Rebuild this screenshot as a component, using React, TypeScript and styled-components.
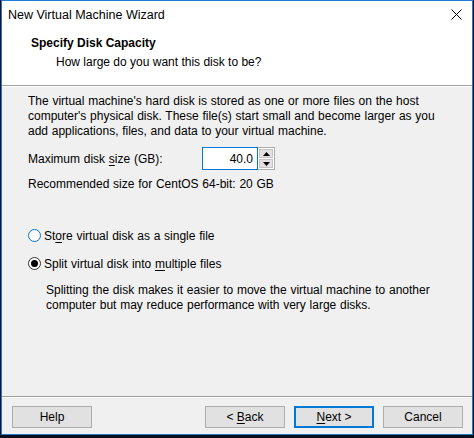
import React from "react";
import styled, { createGlobalStyle } from "styled-components";

const Global = createGlobalStyle`
  html, body { margin: 0; padding: 0; background: #0b0f1a; }
  body { font-family: "Liberation Sans", Arial, sans-serif; font-size: 12px; color: #000; }
  * { box-sizing: border-box; }
`;

const Page = styled.div`
  width: 474px;
  height: 438px;
  padding: 0 1px 3px 1px;
  display: flex;
`;

const Window = styled.div`
  flex: 1;
  display: flex;
  flex-direction: column;
  border: 1px solid #1a7ad4;
  background: #f0f0f0;
`;

const TitleBar = styled.div`
  height: 29px;
  background: #fff;
  display: flex;
  align-items: center;
  justify-content: space-between;
  padding: 0 10px 2px 6px;
`;

const TitleText = styled.span`
  font-size: 12.5px;
  color: #000;
`;

const CloseIcon = styled.svg`
  width: 11px;
  height: 11px;
  display: block;
`;

const Header = styled.div`
  background: #fff;
  height: 56px;
  padding: 6px 0 0 29px;
  border-bottom: 1px solid #a0a0a0;
  display: flex;
  flex-direction: column;
`;

const HeaderTitle = styled.div`
  font-weight: bold;
  line-height: 15px;
`;

const HeaderSubtitle = styled.div`
  line-height: 15px;
  padding-left: 25px;
  margin-top: 4px;
`;

const Body = styled.div`
  flex: 1;
  display: flex;
  flex-direction: column;
  padding: 7px 16px 0 26px;
  border-top: 1px solid #fff;
  word-spacing: 0.4px;
`;

const Text = styled.div<{ $top?: number; $indent?: number }>`
  line-height: 15px;
  margin-top: ${(p) => p.$top ?? 0}px;
  padding-left: ${(p) => p.$indent ?? 0}px;
`;

const FieldRow = styled.div`
  display: flex;
  align-items: center;
  margin-top: 8px;
`;

const FieldLabel = styled.span`
  width: 174px;
`;

const SpinBox = styled.div`
  display: flex;
  height: 23px;
`;

const SpinInput = styled.div`
  width: 56px;
  border: 1px solid #0078d7;
  background: #fff;
  display: flex;
  align-items: center;
  justify-content: flex-end;
  padding-right: 4px;
`;

const SpinButtons = styled.div`
  width: 17px;
  display: flex;
  flex-direction: column;
  border: 1px solid #adadad;
  border-left: none;
  background: #fff;
  padding: 1px;
  gap: 1px;
`;

const SpinButton = styled.div`
  flex: 1;
  background: #e1e1e1;
  border: 1px solid #c4c4c4;
  display: flex;
  align-items: center;
  justify-content: center;
`;

const Arrow = styled.svg`
  width: 7px;
  height: 4px;
  display: block;
`;

const RadioRow = styled.div<{ $top: number }>`
  display: flex;
  align-items: center;
  margin-top: ${(p) => p.$top}px;
  height: 15px;
`;

const RadioCircle = styled.span<{ $checked?: boolean; $focus?: boolean }>`
  width: 13px;
  height: 13px;
  border-radius: 50%;
  border: 1px solid ${(p) => (p.$focus ? "#0078d7" : "#333")};
  background: #fff;
  display: flex;
  align-items: center;
  justify-content: center;
  margin-right: 3px;
  &::after {
    content: "";
    width: 7px;
    height: 7px;
    border-radius: 50%;
    background: ${(p) => (p.$checked ? "#000" : "transparent")};
  }
`;

const U = styled.span`
  text-decoration: underline;
  text-underline-offset: 2px;
`;

const Footer = styled.div`
  height: 38px;
  border-top: 1px solid #a0a0a0;
  box-shadow: inset 0 1px 0 #fff;
  display: flex;
  align-items: flex-start;
  padding: 9px 9px 0 10px;
`;

const Button = styled.button<{ $default?: boolean; $gap?: number }>`
  width: 80px;
  height: 22px;
  margin-left: ${(p) => p.$gap ?? 0}px;
  font-family: "Liberation Sans", Arial, sans-serif;
  font-size: 12px;
  color: #000;
  background: #e1e1e1;
  border: ${(p) => (p.$default ? "2px solid #0078d7" : "1px solid #adadad")};
  padding: 0;
  display: flex;
  align-items: center;
  justify-content: center;
  white-space: pre;
`;

const Grow = styled.div`
  flex: 1;
`;

export default function App() {
  return (
    <>
      <Global />
      <Page>
        <Window>
          <TitleBar>
            <TitleText>New Virtual Machine Wizard</TitleText>
            <CloseIcon viewBox="0 0 11 11">
              <path d="M0.5 0.5 L10.5 10.5 M10.5 0.5 L0.5 10.5" stroke="#000" strokeWidth="1" />
            </CloseIcon>
          </TitleBar>
          <Header>
            <HeaderTitle>Specify Disk Capacity</HeaderTitle>
            <HeaderSubtitle>How large do you want this disk to be?</HeaderSubtitle>
          </Header>
          <Body>
            <Text>
              The virtual machine's hard disk is stored as one or more files on the host
              <br />
              computer's physical disk. These file(s) start small and become larger as you
              <br />
              add applications, files, and data to your virtual machine.
            </Text>
            <FieldRow>
              <FieldLabel>
                Maximum disk <U>s</U>ize (GB):
              </FieldLabel>
              <SpinBox>
                <SpinInput>40.0</SpinInput>
                <SpinButtons>
                  <SpinButton>
                    <Arrow viewBox="0 0 7 4">
                      <path d="M0 4 L3.5 0 L7 4 Z" fill="#000" />
                    </Arrow>
                  </SpinButton>
                  <SpinButton>
                    <Arrow viewBox="0 0 7 4">
                      <path d="M0 0 L7 0 L3.5 4 Z" fill="#000" />
                    </Arrow>
                  </SpinButton>
                </SpinButtons>
              </SpinBox>
            </FieldRow>
            <Text $top={7}>Recommended size for CentOS 64-bit: 20 GB</Text>
            <RadioRow $top={36}>
              <RadioCircle $focus />
              <span>
                St<U>o</U>re virtual disk as a single file
              </span>
            </RadioRow>
            <RadioRow $top={13}>
              <RadioCircle $checked />
              <span>
                Split virtual disk into <U>m</U>ultiple files
              </span>
            </RadioRow>
            <Text $top={12} $indent={18}>
              Splitting the disk makes it easier to move the virtual machine to another
              <br />
              computer but may reduce performance with very large disks.
            </Text>
          </Body>
          <Footer>
            <Button>Help</Button>
            <Grow />
            <Button>
              <span>
                {"< "}
                <U>B</U>ack
              </span>
            </Button>
            <Button $default $gap={9}>
              <span>
                <U>N</U>
                {"ext >"}
              </span>
            </Button>
            <Button $gap={9}>Cancel</Button>
          </Footer>
        </Window>
      </Page>
    </>
  );
}
